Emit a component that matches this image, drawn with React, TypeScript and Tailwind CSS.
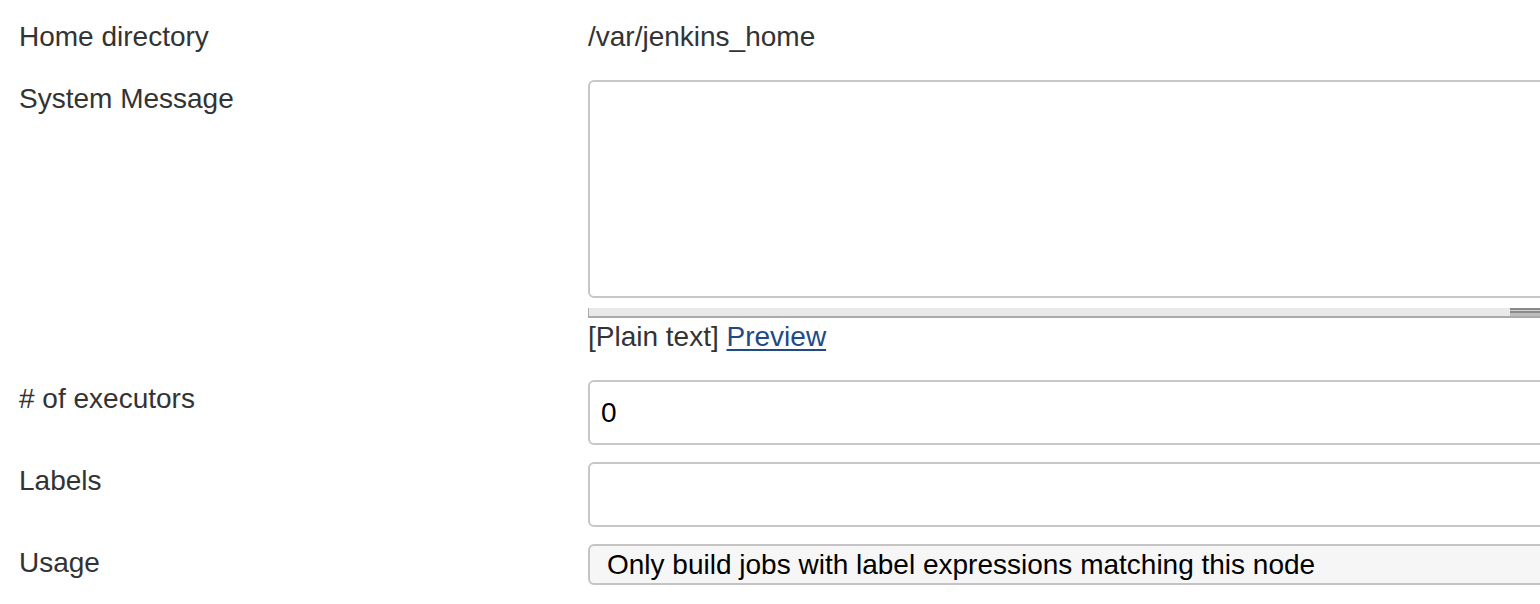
import React from 'react';

const Label = ({ children, className = '' }: { children: React.ReactNode; className?: string }) => (
  <div className={`text-[28px] leading-8 text-[#333] ${className}`}>{children}</div>
);

const App = () => {
  return (
    <div
      className="w-[1540px] h-[604px] overflow-hidden bg-white"
      style={{ fontFamily: '"Liberation Sans", Arial, sans-serif' }}
    >
      <div className="grid grid-cols-[569px_1000px] pl-[19px] pt-[21px]">
        {/* Home directory */}
        <Label>Home directory</Label>
        <Label>/var/jenkins_home</Label>

        {/* System Message */}
        <Label className="mt-[30px]">System Message</Label>
        <div className="mt-[27px] flex flex-col">
          <textarea className="h-[218px] w-[962px] resize-none rounded-[6px] border-2 border-[#c7c7c7] bg-white outline-none" />
          <div className="mt-[10px] flex h-[10px] w-[962px] border-b-2 border-l border-[#aaa] bg-[#e9e9e9]">
            <div className="flex-1" />
            <div className="flex w-[40px] flex-col">
              <div className="h-[2px] bg-[#8a8a8a]" />
              <div className="h-[1px] bg-[#d0d0d0]" />
              <div className="h-[2px] bg-[#8a8a8a]" />
              <div className="h-[3px] bg-[#bdbdbd]" />
            </div>
          </div>
          <div className="mt-[3px] text-[28px] leading-8 text-[#333]">
            [Plain text]{' '}
            <a href="#" className="text-[#204a87] underline underline-offset-[3px]">
              Preview
            </a>
          </div>
        </div>

        {/* # of executors */}
        <Label className="mt-[30px]"># of executors</Label>
        <div className="mt-[27px]">
          <input
            type="text"
            defaultValue="0"
            className="h-[65px] w-[962px] rounded-[6px] border-2 border-[#c7c7c7] bg-white px-[11px] text-[28px] text-black outline-none"
          />
        </div>

        {/* Labels */}
        <Label className="mt-[20px]">Labels</Label>
        <div className="mt-[17px]">
          <input
            type="text"
            className="h-[65px] w-[962px] rounded-[6px] border-2 border-[#c7c7c7] bg-white px-[11px] text-[28px] text-black outline-none"
          />
        </div>

        {/* Usage */}
        <Label className="mt-[20px]">Usage</Label>
        <div className="mt-[17px]">
          <div className="flex h-[41px] w-[962px] items-center rounded-[6px] border-2 border-[#c4c4c4] bg-[#f6f6f6] pl-[17px] text-[28px] leading-8 text-black">
            Only build jobs with label expressions matching this node
          </div>
        </div>
      </div>
    </div>
  );
};

export default App;
